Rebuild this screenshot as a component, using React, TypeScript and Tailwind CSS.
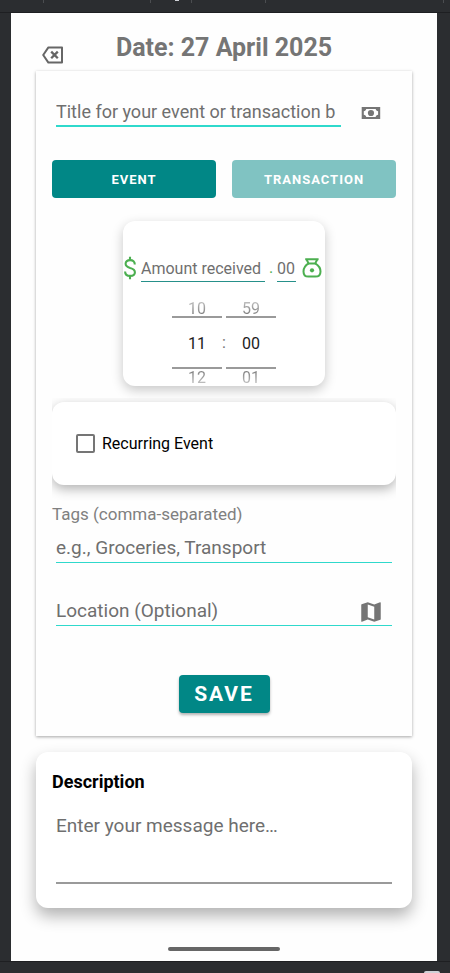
import { MdMap } from "react-icons/md";

const field =
  "block h-[30px] min-w-0 border-b bg-transparent leading-7 text-[#212121] outline-none placeholder:text-[#6f6f6f] placeholder:opacity-100";

const amountField =
  "h-7 min-w-0 border-b border-[#26908a] pt-0.5 text-base text-[#212121] outline-none placeholder:text-[#6f6f6f] placeholder:opacity-100";

function BackspaceIcon() {
  return (
    <svg viewBox="0 0 24 24" className="size-6" fill="none" stroke="#666666" strokeWidth="2">
      <path d="M8.4 4.4H22V19.6H8.4L3.2 12Z" strokeLinejoin="round" />
      <path d="M11.2 8.6L17.8 15.2M17.8 8.6L11.2 15.2" strokeWidth="2.3" />
    </svg>
  );
}

function BanknoteIcon() {
  return (
    <svg viewBox="0 0 20 20" className="size-5" fill="#757575">
      <path
        fillRule="evenodd"
        d="M.7 4H19.2V16H.7ZM5.2 6C5.1 7.2 4 8.2 2.8 8.2V11.8C4 11.8 5.1 12.8 5.2 14H14.7C14.8 12.8 15.9 11.8 17.1 11.8V8.2C15.9 8.2 14.8 7.2 14.7 6Z"
      />
      <circle cx="9.95" cy="10" r="3.1" />
    </svg>
  );
}

function DollarIcon() {
  return (
    <svg viewBox="0 0 12 24" className="h-6 w-3 shrink-0" fill="none" stroke="#4caf50" strokeWidth="2.1">
      <path d="M6 .8V4.2M6 19.8V23.2" />
      <path d="M10.8 8.4C10.8 5.7 9 4.1 6.1 4.1C3.3 4.1 1.6 5.6 1.6 7.8C1.6 10.2 3.4 11.1 6.1 11.9C9.1 12.7 10.9 13.7 10.9 16.2C10.9 18.5 9 19.9 6.2 19.9C3.1 19.9 1.1 18.3 1.1 15.4" />
    </svg>
  );
}

function MoneyBagIcon() {
  return (
    <svg viewBox="0 0 20 20" className="size-5" fill="none" stroke="#4caf50" strokeWidth="2">
      <path d="M3.2 1.2H16.6M4.4 1.2L6.6 5.4M15.4 1.2L13.2 5.4M6 5.4H13.8" />
      <path d="M6.6 5.4C3.4 7.4 1.5 10.4 1.5 13.4C1.5 16.8 3.6 18.6 6.4 18.6H13.4C16.2 18.6 18.5 16.8 18.5 13.4C18.5 10.4 16.4 7.4 13.2 5.4" />
      <circle cx="10" cy="12.3" r="2.1" fill="#4caf50" stroke="none" />
    </svg>
  );
}

function Spinner({ label, prev, value, next }: { label: string; prev: string; value: string; next: string }) {
  return (
    <div className="flex w-[50px] flex-col text-center text-base">
      <button
        type="button"
        className="h-4 bg-linear-to-b from-[#c8c8c8] to-[#777777] bg-clip-text leading-[18px] text-transparent"
      >
        {prev}
      </button>
      <input
        aria-label={label}
        defaultValue={value}
        className="h-[53px] w-full border-y-2 border-[#9a9a9a] bg-transparent pt-0.5 text-center text-[#1c1c1c] outline-none"
      />
      <button
        type="button"
        className="h-4 bg-linear-to-b from-[#777777] to-[#c8c8c8] bg-clip-text leading-[18px] text-transparent"
      >
        {next}
      </button>
    </div>
  );
}

export default function App() {
  return (
    <div className="flex min-h-screen flex-col bg-[#2b2d30] font-[Roboto,sans-serif]">
      <div className="flex h-[13px] items-start border-b border-[#1e1f22] pr-1.5 pl-[43px]">
        <span className="h-[3px] w-px bg-[#4b4d50]" />
        <span className="ml-[106px] h-[3px] w-px bg-[#4b4d50]" />
        <span className="ml-6 h-px w-1 bg-[#ced0d6]" />
        <span className="ml-3 h-[3px] w-px bg-[#4b4d50]" />
        <span className="ml-[73px] h-[3px] w-px bg-[#4b4d50]" />
        <span className="ml-auto h-[3px] w-px bg-[#4b4d50]" />
      </div>

      <main className="mr-[13px] ml-[11px] flex flex-1 flex-col bg-[#fefefe] px-[25px]">
        <header className="grid h-[58px] grid-cols-[24px_1fr_24px] items-end px-1">
          <button type="button" aria-label="Clear" className="pb-1">
            <BackspaceIcon />
          </button>
          <h1 className="pb-[7px] text-center text-[25px] leading-8 font-bold whitespace-nowrap text-[#757575]">
            Date: 27 April 2025
          </h1>
        </header>

        <form className="bg-[#fefefe] px-4 pt-[26px] pb-[23px] shadow-[0_1px_3px_rgba(0,0,0,0.35)]">
          <div className="flex items-end gap-5 pr-[15px] pl-1">
            <input
              aria-label="Title"
              placeholder="Title for your event or transaction b"
              className={`${field} flex-1 border-b-2 border-[#2fd9cc] text-lg`}
            />
            <button type="button" aria-label="Transaction amount" className="pb-1">
              <BanknoteIcon />
            </button>
          </div>

          <div className="mt-[33px] grid grid-cols-2 gap-4 text-[13px] font-bold tracking-[1px] text-white">
            <button type="button" className="h-[38px] rounded bg-[#018786] pt-0.5">
              EVENT
            </button>
            <button type="button" className="h-[38px] rounded bg-[#80c3c2] pt-0.5">
              TRANSACTION
            </button>
          </div>

          <section className="mx-auto mt-[23px] w-[202px] rounded-xl bg-white pt-8 pb-px shadow-[0_4px_12px_rgba(0,0,0,0.22)]">
            <div className="flex h-[29px] items-center pl-px">
              <DollarIcon />
              <input
                aria-label="Amount received"
                placeholder="Amount received"
                className={`${amountField} ml-[5px] w-[124px]`}
              />
              <span className="w-3 text-center text-base text-[#4caf50]">.</span>
              <input aria-label="Cents" placeholder="00" className={`${amountField} w-[19px]`} />
              <span className="ml-1.5">
                <MoneyBagIcon />
              </span>
            </div>
            <div className="mt-[18px] flex items-center justify-center">
              <Spinner label="Hour" prev="10" value="11" next="12" />
              <span className="w-1 text-center text-base text-[#757575]">:</span>
              <Spinner label="Minute" prev="59" value="00" next="01" />
            </div>
          </section>

          <div className="mt-3 overflow-hidden pt-1 pb-[17px]">
            <div className="flex h-[83px] items-center rounded-xl bg-white px-6 shadow-[0_4px_12px_rgba(0,0,0,0.3)]">
              <label className="flex items-center gap-[7px] text-base text-black">
                <input
                  type="checkbox"
                  className="size-[19px] appearance-none rounded-xs border-2 border-[#757575] checked:bg-[#018786]"
                />
                Recurring Event
              </label>
            </div>
          </div>

          <label htmlFor="tags" className="mt-0.5 block text-[17px] leading-5 text-[#808080]">
            Tags (comma-separated)
          </label>
          <div className="mt-[9px] px-1">
            <input
              id="tags"
              placeholder="e.g., Groceries, Transport"
              className={`${field} w-full border-[#2fd9cc] text-[19px]`}
            />
          </div>
          <div className="mx-1 mt-8 flex items-end border-b border-[#2fd9cc] pr-2">
            <input
              aria-label="Location"
              placeholder="Location (Optional)"
              className={`${field} flex-1 border-transparent pt-0.5 text-[19px]`}
            />
            <button type="button" aria-label="Open map">
              <MdMap className="size-[26px] text-[#757575]" />
            </button>
          </div>

          <button
            type="submit"
            className="mx-auto mt-[49px] block h-[38px] w-[91px] rounded bg-[#018786] pt-0.5 text-[21px] font-bold tracking-[2px] text-white shadow-[0_2px_3px_rgba(0,0,0,0.3)]"
          >
            SAVE
          </button>
        </form>

        <section className="mt-4 rounded-xl bg-white px-4 pt-4 pb-6 shadow-[0_8px_16px_rgba(0,0,0,0.3)]">
          <label htmlFor="description" className="block text-lg leading-7 font-bold text-black">
            Description
          </label>
          <div className="mt-3 px-1">
            <textarea
              id="description"
              placeholder="Enter your message here…"
              className="block h-[76px] w-full resize-none border-b-2 border-[#9a9a9a] pt-1 text-[19px] leading-7 outline-none placeholder:text-[#6f6f6f]"
            />
          </div>
        </section>

        <div className="mx-auto mt-auto mb-2.5 h-1 w-28 rounded-full bg-[#666666]" />
      </main>

      <div className="flex h-3 items-end justify-end border-t border-[#1e1f22] pr-2.5">
        <span className="h-0.5 w-4 rounded-t-xs bg-[#ced0d6]" />
      </div>
    </div>
  );
}
